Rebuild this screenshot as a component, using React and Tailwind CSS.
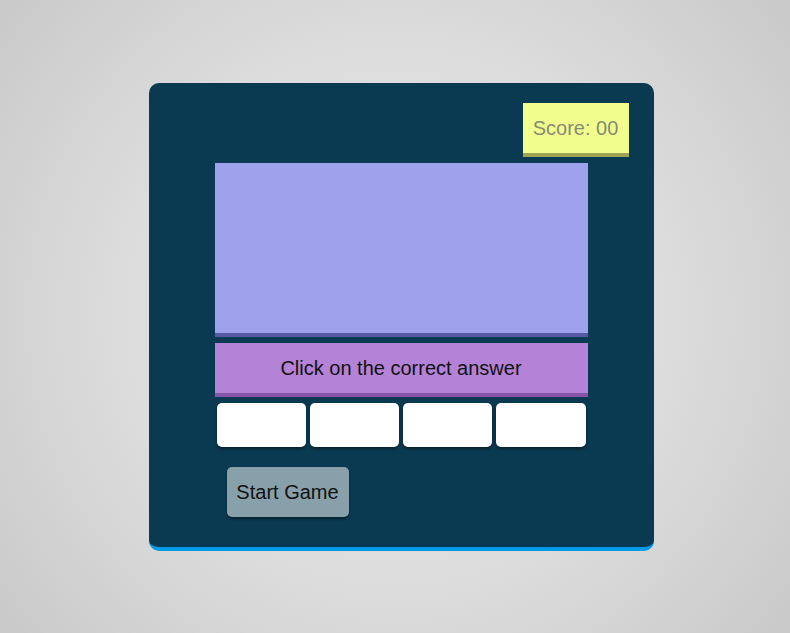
import React from "react";

export default function App() {
  return (
    <div
      className="min-h-screen w-full flex items-center justify-center pl-[12px] bg-[radial-gradient(circle_at_center,#e6e6e6_0%,#dcdcdc_55%,#c9c9c9_100%)]"
      style={{ fontFamily: '"Liberation Sans", Arial, sans-serif' }}
    >
      <div className="w-[505px] h-[468px] rounded-[10px] bg-[#0a3a52] border-b-4 border-[#039be5] pt-[20px] flex flex-col">
        <div className="flex justify-end pr-[25px]">
          <div className="w-[106px] h-[54px] bg-[#f1fe8e] border-b-4 border-[#a0a553] flex items-center justify-center text-[20px] text-[#878b74]">
            Score: 00
          </div>
        </div>
        <div className="w-[373px] mx-auto mt-[6px] flex flex-col">
          <div className="h-[174px] bg-[#9ea1eb] border-b-4 border-[#5759a5]" />
          <div className="mt-[6px] h-[54px] bg-[#b482d7] border-b-4 border-[#8756a8] flex items-center justify-center text-[20px] text-[#111]">
            Click on the correct answer
          </div>
          <div className="mt-[6px] flex">
            {[0, 1, 2, 3].map((i) => (
              <div
                key={i}
                className="flex-1 mx-[2px] h-[44px] bg-white rounded-[5px] shadow-[0_2px_3px_rgba(0,0,0,0.45)]"
              />
            ))}
          </div>
          <div className="mt-[20px] pl-[12px]">
            <button className="w-[122px] h-[50px] rounded-[5px] bg-[#87a0aa] text-[20px] text-[#111] shadow-[0_2px_3px_rgba(0,0,0,0.45)]">
              Start Game
            </button>
          </div>
        </div>
      </div>
    </div>
  );
}
